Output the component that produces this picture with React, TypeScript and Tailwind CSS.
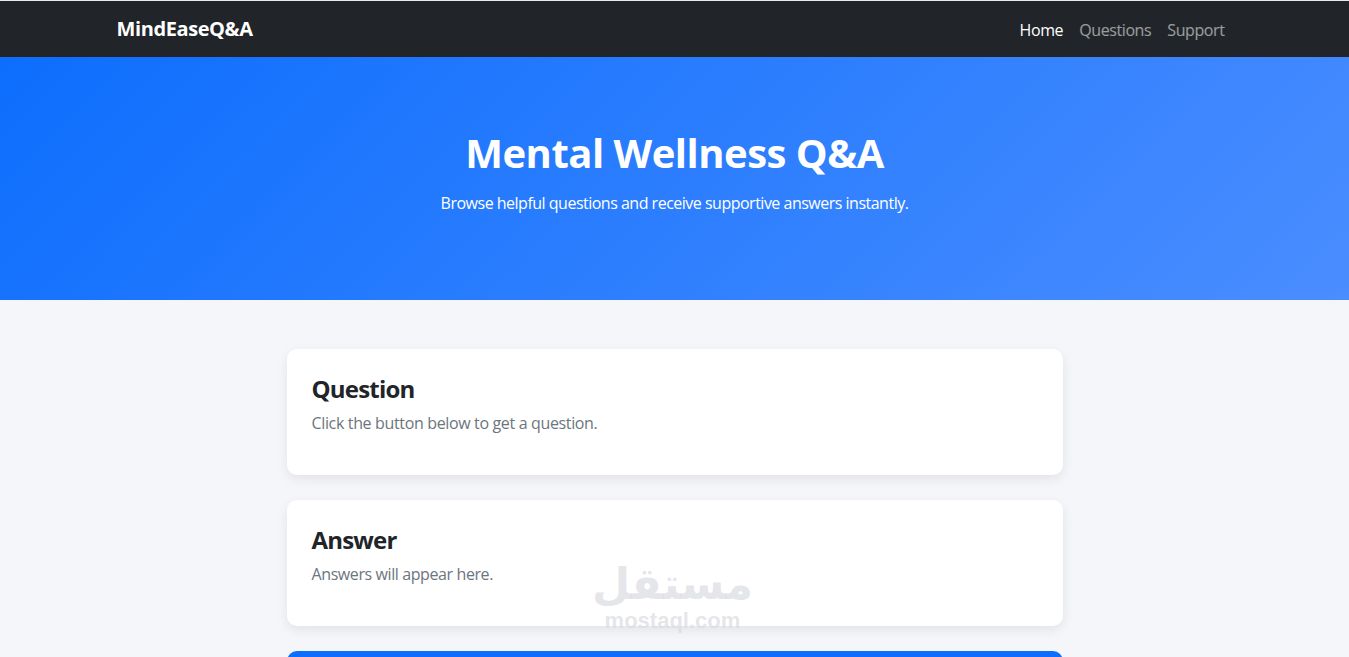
export default function App() {
  return (
    <div className="min-h-screen bg-[#f4f6f9] font-['Open_Sans',sans-serif] relative overflow-hidden">
      <div className="h-px bg-[#e9ecef]" />
      {/* NAVBAR */}
      <nav className="bg-[#212529] h-14">
        <div className="w-[1140px] mx-auto px-3 h-full flex items-center justify-between">
          <a className="text-white text-xl font-bold tracking-[-0.02em]">MindEaseQ&amp;A</a>
          <ul className="flex items-center text-base pt-0.5 tracking-[-0.4px]">
            <li><a className="px-2 text-white">Home</a></li>
            <li><a className="px-2 text-white/55">Questions</a></li>
            <li><a className="px-2 text-white/55">Support</a></li>
          </ul>
        </div>
      </nav>

      {/* HERO */}
      <header className="bg-[linear-gradient(135deg,#0d6efd,#4a8dff)] text-white text-center pt-[72px] pb-[85px]">
        <h1 className="text-[40px] leading-[48px] font-bold mb-[14px] tracking-[-0.5px]">Mental Wellness Q&amp;A</h1>
        <p className="text-base leading-6 tracking-[-0.5px]">Browse helpful questions and receive supportive answers instantly.</p>
      </header>

      {/* CARDS */}
      <main className="w-[776px] mx-auto pt-[49px]">
        <div className="bg-white rounded-[10px] shadow-[0_4px_12px_rgba(0,0,0,0.08)] p-[25px] pb-[40px] mb-[25px]">
          <h3 className="text-2xl leading-[29px] font-bold text-[#212529] mb-2 tracking-[-0.8px]">Question</h3>
          <p className="text-base leading-6 text-[#6c757d] tracking-[-0.35px]">Click the button below to get a question.</p>
        </div>
        <div className="bg-white rounded-[10px] shadow-[0_4px_12px_rgba(0,0,0,0.08)] p-[25px] pb-[40px] mb-[25px]">
          <h3 className="text-2xl leading-[29px] font-bold text-[#212529] mb-2 tracking-[-0.8px]">Answer</h3>
          <p className="text-base leading-6 text-[#6c757d] tracking-[-0.4px]">Answers will appear here.</p>
        </div>
        <button className="w-full bg-[#0d6efd] text-white rounded-[10px] py-3 text-base font-semibold">
          Get a Question
        </button>
      </main>

      {/* watermark */}
      <div className="absolute left-[592px] top-[560px] flex flex-col items-center text-[#d9dbe0]/70 pointer-events-none select-none">
        <span className="text-[44px] leading-[48px] font-bold font-['DejaVu_Sans',sans-serif]">مستقل</span>
        <span className="text-[22px] leading-[26px] font-bold font-['Liberation_Sans',sans-serif]">mostaql.com</span>
      </div>
    </div>
  );
}
